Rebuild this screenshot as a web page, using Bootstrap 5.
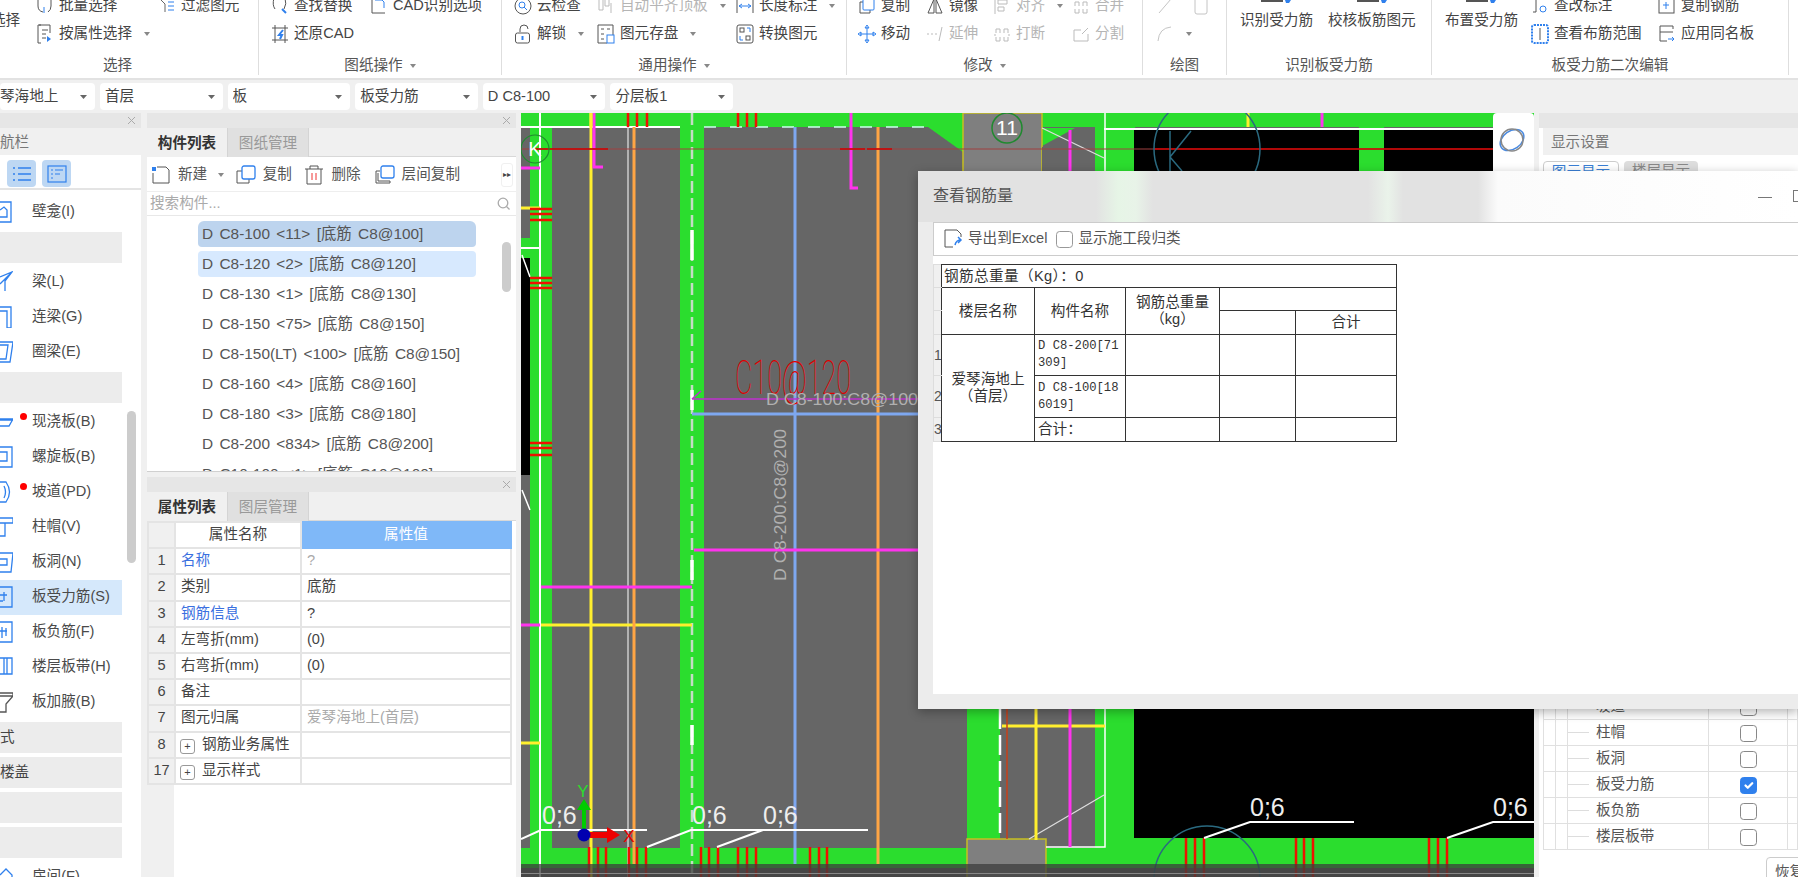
<!DOCTYPE html>
<html lang="zh-CN">
<head>
<meta charset="UTF-8">
<title>查看钢筋量</title>
<link href="https://cdn.jsdelivr.net/npm/bootstrap@5.3.0/dist/css/bootstrap.min.css" rel="stylesheet">
<style>
html,body{height:877px;overflow:hidden}
body{position:relative;background:#f0f0f0;color:#444;font-family:"Liberation Sans","Noto Sans CJK SC",sans-serif;font-size:14.6px}
svg{display:block;flex:none}
/* ribbon */
.rb{height:80px;background:#fff;border-bottom:2px solid #e2e2e2;overflow:hidden}
.rb-group{height:75px;border-right:1px solid #dedede;flex:none}
.rb-tools{display:grid;grid-auto-rows:28px;margin-top:-8px;height:56px;white-space:nowrap}
.rb-label{height:28px;line-height:28px;margin-top:3px;text-align:center;color:#555}
.rb-tool{display:flex;align-items:center;gap:5px}
.rb-off{color:#b5b5b5}
.rb-caret{display:inline-block;border:3.5px solid transparent;border-top:4px solid #888;border-bottom:0;margin-left:7px;vertical-align:middle}
.g1{width:259px}.g1 .rb-tools{grid-template-columns:36px 122px 1fr}
.g1 .rb-label{padding-right:23px}
.g2{width:243px}.g2 .rb-tools{padding-left:12px;grid-template-columns:99px 1fr}
.g3{width:345px}.g3 .rb-tools{padding-left:12px;grid-template-columns:83px 139px 1fr}
.g4{width:296px}.g4 .rb-tools{padding-left:11px;grid-template-columns:68px 67px 79px 1fr}
.g4 .rb-label{padding-right:20px}
.g5{width:84px}.g5 .rb-tools{padding-left:13px;grid-template-columns:36px 1fr}
.g6{width:205px}.g6 .rb-tools{padding-left:13px;grid-template-columns:88px 1fr}
.g7{width:357px}.g7 .rb-tools{padding-left:13px;grid-template-columns:86px 127px 1fr}
.rb-big{grid-row:span 2;justify-self:start;padding-top:8px;display:flex;flex-direction:column;align-items:center;line-height:18px}
.rb-big svg{margin-bottom:8px}
.rb-clip{margin-left:-9px;grid-row:span 2;line-height:56px}
/* selector bar */
.sel-bar{height:33px;padding-top:3px;gap:5px}
.sel-box{width:122.6px;height:27px;min-height:0;padding:0 18px 0 5px;border:0;border-radius:4px;font-size:14.6px;color:#444;line-height:27px;background-size:7px 4px;background-position:right 8px center;background-image:url("data:image/svg+xml,%3Csvg xmlns='http://www.w3.org/2000/svg' viewBox='0 0 7 4'%3E%3Cpath d='M0 0h7L3.500 4z' fill='%23666'/%3E%3C/svg%3E")}
.sel-first{width:95px;padding-left:0}
/* docks */
.dock-row{height:764px;gap:5px}
.dock-nav{width:141px;margin-right:1px}
.dock-mid{width:369px}
.dock-right{width:259px;overflow:hidden;background:#fff}
.dock-strip{height:15px;background:#e6e6e6;display:flex;justify-content:flex-end;align-items:center;padding-right:5px;flex:none}
.dock-title{height:27px;line-height:29px;color:#777;background:#f0f0f0;flex:none}
.nav-body{background:#fff;position:relative;flex:1;overflow:hidden}
.nav-btns{height:35px;border-bottom:2px solid #e4e4e4;padding:5px 0 0 7px;gap:6px;margin-bottom:4.500px}
.nav-btn{width:29px;height:27px;background:#bdd7f3;border-radius:4px;display:flex;align-items:center;justify-content:center}
.nav-item{height:35px;width:122px;display:flex;align-items:center;position:relative;color:#4a4a4a}
.nav-item svg{margin-left:-1px;margin-right:19px}
.nav-on{background:#d5e8fb}
.nav-head{height:31px;width:122px;background:#ececec;margin:2px 0;line-height:31px;overflow:hidden}
.nav-head+.nav-head{margin-top:4px}
.nav-dot{position:absolute;left:19.500px;top:8px;width:7px;height:7px;border-radius:50%;background:#f00}
.nav-scroll{position:absolute;left:127px;top:256px;width:9px;height:152px;border-radius:5px;background:#ccc}
.tab-row{height:29px;background:#f0f0f0;border-bottom:1px solid #d8d8d8;flex:none}
.tab-on,.tab-off{width:81px;text-align:center;line-height:30px;height:29px}
.tab-on{font-weight:700;color:#333;background:#f0f0f0;border-right:1px solid #d4d4d4}
.tab-off{background:#e0e0e0;color:#999;border-right:1px solid #d4d4d4}
.mid-top{height:344px;flex:none;background:#fff;overflow:hidden;position:relative;border-bottom:1px solid #d0d0d0}
.mid-bot{margin-top:5px;flex:1;background:#fff;overflow:hidden}
.mid-tools{height:35px;padding-top:2px;color:#555;border-bottom:1px solid #eee;position:relative}
.mid-tool{display:flex;align-items:center;gap:7px;position:relative}
.mid-new{margin:0 11.500px 0 4px}
.mid-copy{margin-right:12.500px}
.mid-del{margin-right:14px}
.mid-more{margin-left:auto;margin-right:3px;width:12px;height:24px;background:#fff;border:1px solid #f0f0f0;border-radius:3px;font-size:8px;line-height:22px;color:#444;text-align:center}
.mid-search{height:24px;border-bottom:1px solid #e8e8e8;padding:0 6px 0 3px;color:#aaa}
.part-list{padding:5px 0 0 51px;width:329px;height:259px;overflow:hidden}
.part-item{height:26px;margin-bottom:4px;border:0;border-radius:4px;padding:0 0 0 4px;background:none;line-height:26px;color:#555;white-space:nowrap;word-spacing:2.100px;font-size:15.400px}
.part-a{background:#bdd4ee}
.part-b{background:#d7e9fe}
.part-scroll{position:absolute;left:355px;top:114px;width:9px;height:50px;background:#ccc;border-radius:5px}
.prop-wrap{background:linear-gradient(90deg,#f0f0f0 27px,#fff 27px);flex:1}
.prop-table{width:365px;margin:0;table-layout:fixed;border-collapse:collapse;color:#444}
.prop-table td,.prop-table th{padding:0 5px;height:26.200px;border:2px solid #e4e4e4;font-weight:400;white-space:nowrap;line-height:22px;background:#fff;color:inherit}
.prop-table .p-no{width:27px;background:#f0f0f0;text-align:center;padding:0}
.prop-table .p-name{width:126px}
.prop-table .p-head{text-align:center}
.prop-table .p-val{background:#7fb8f8;color:#fff;text-align:center;border-color:#7fb8f8}
.prop-blue{color:#3a6fe0 !important}
.prop-dim{color:#aaa !important}
.prop-plus{display:inline-block;width:15px;height:15px;border:1px solid #999;border-radius:3px;text-align:center;line-height:12px;font-size:11px;margin:0 7px 0 -1px;vertical-align:-1px}
.cad-wrap{width:1013px;position:relative;overflow:hidden;flex:none}
.cad-tools{position:absolute;right:0;top:0;width:41px;height:190px;background:#fff;border-radius:4px 4px 0 0;padding:13px 5px;display:flex;flex-direction:column;gap:22px}
/* right dock */
.show-tabs{height:30px;padding:6px 4px 0;gap:5px;background:#fff;color:#3a7fd5}
.show-tab{width:76px;height:30px;border:1px solid #ccc;border-radius:4px;text-align:center}
.show-tab2{width:74px;background:#ddd;color:#888;border:0}
.show-bottom{margin-top:auto}
.show-table{width:255px;margin:0 0 0 4px;border-collapse:collapse;table-layout:fixed;background:#fff}
.show-table td{height:26px;border:1px solid #e0e0e0;padding:0}
.show-c1{width:12px}
.show-c3{width:141px;white-space:nowrap;color:#555}
.show-c3 i{display:inline-block;width:21px;height:1px;background:#ddd;vertical-align:middle;margin-right:7px}
.show-c4{width:79px;text-align:center}
.show-check{width:17px;height:17px;margin:3px 0 0;border:1px solid #888;border-radius:3px;display:inline-block;float:none}
.show-check:checked{background-color:#2f80ed;border-color:#2f80ed}
.show-foot{height:27px;padding:7px 0 0 227px;background:#fff;white-space:nowrap}
.show-reset{height:30px;width:70px;border:1px solid #ccc;border-radius:4px;padding:4px 8px;color:#555;font-size:14.600px;background:#fff;text-align:left}
/* dialog */
.rebar-win{position:absolute;left:918px;top:171px;right:0;height:538px;background:#ececec;box-shadow:0 3px 10px rgba(0,0,0,.3);padding:0 0 15px 15px;display:flex;flex-direction:column}
.rebar-title{height:51px;flex:none;margin-left:-15px;padding:0 0 2px 15px;font-size:16px;color:#555;background:linear-gradient(90deg,#e2e2e2 0,#e2e2e2 178px,#e6f5e6 200px,#e8f3e8 218px,#e2e2e2 235px,#e2e2e2 450px,#eaf3ea 470px,#e2e2e2 485px,#e2e2e2 560px,#fbfbfb 580px,#fff 100%)}
.rebar-min{width:14px;height:1px;background:#777;margin:4px 21px 0 auto}
.rebar-max{width:12px;height:12px;border:1px solid #777;margin-right:-7px}
.rebar-body{flex:1;background:#fff;position:relative;overflow:hidden}
.rebar-tools{height:34px;border:1px solid #ccc;border-width:1px 0 1px 1px;gap:5px;padding-left:9px;color:#555;background:#fff}
.rebar-check{width:17px;height:17px;margin:0;border:1px solid #999;border-radius:3px}
.rebar-table{margin-top:8px;border-collapse:collapse;table-layout:fixed;width:463px;font-size:14.600px;color:#333}
.rebar-table td{border:1px solid #333;padding:0;text-align:center;line-height:17px;background:#fff}
.rebar-table .r-no{border:1px solid #ddd;border-right-color:#333;background:#f0f0f0;color:#555;font-size:14px;overflow:hidden;text-align:left}
.rebar-table .r-mono{font-family:"Liberation Mono","Noto Sans CJK SC",monospace;font-size:12.200px;text-align:left;padding-left:3px;white-space:nowrap}
.rebar-table .r-left{text-align:left;padding-left:2px;letter-spacing:.4px}
.rebar-table .r-pl{text-align:left;padding-left:3px}
.rc0{width:8px}.rc1{width:93px}.rc2{width:91px}.rc3{width:94px}.rc4{width:76px}.rc5{width:101px}
.rr23{height:23px}.rr24{height:24px}.rr41{height:41px}.rr42{height:42px}
.cad-label{font-family:"Liberation Sans",sans-serif}
.cad-thin{font-family:Roboto,"Liberation Sans",sans-serif;font-weight:100}
</style>
</head>
<body>

<!-- ribbon -->
<div class="rb d-flex">
  <div class="rb-group g1">
    <div class="rb-tools">
      <div class="rb-clip">选择</div>
      <div class="rb-tool"><svg width="18" height="18" viewBox="0 0 18 18" fill="none" stroke="#555"><path d="M2 1v8q0 5 5 6M15 1v8q0 4-3 6" /><path d="M8 10v6" stroke="#2f80ed"/></svg>批量选择</div>
      <div class="rb-tool"><svg width="18" height="18" viewBox="0 0 18 18" fill="none" stroke="#666"><path d="M2 2l5 5v8"/><path d="M10 5h6M10 9h6M10 13h6" stroke="#2f80ed"/></svg>过滤图元</div>
      <div class="rb-tool"><svg width="18" height="20" viewBox="0 0 18 20" fill="none" stroke="#555"><path d="M5 1H2v18h3M3 1h11v8"/><path d="M6 6h6M6 10h4M6 14h4" /><path d="M11 12l4 3-4 3z" fill="#2f80ed" stroke="none"/></svg>按属性选择<span class="rb-caret"></span></div>
    </div>
    <div class="rb-label">选择</div>
  </div>
  <div class="rb-group g2">
    <div class="rb-tools">
      <div class="rb-tool"><svg width="18" height="18" viewBox="0 0 18 18" fill="none" stroke="#555"><path d="M3 1Q1 8 4 12M14 1q2 6-1 11"/><path d="M11 12l4 4" stroke="#2f80ed" stroke-width="2"/></svg>查找替换</div>
      <div class="rb-tool"><svg width="18" height="18" viewBox="0 0 18 18" fill="none" stroke="#555"><path d="M2 1v15h13"/><path d="M5 3h7l2 2v6" stroke="#2f80ed"/></svg>CAD识别选项</div>
      <div class="rb-tool"><svg width="18" height="20" viewBox="0 0 18 20" fill="none" stroke="#555"><path d="M4 1v18M14 1v18M1 4h16M1 16h16"/><path d="M12 6l-4 5h3l-2 4" stroke="#2f80ed" stroke-width="2"/></svg>还原CAD</div>
    </div>
    <div class="rb-label">图纸操作<span class="rb-caret"></span></div>
  </div>
  <div class="rb-group g3">
    <div class="rb-tools">
      <div class="rb-tool"><svg width="18" height="18" viewBox="0 0 18 18" fill="none" stroke="#555"><circle cx="9" cy="9" r="8"/><circle cx="8" cy="8" r="3" stroke="#2f80ed"/><path d="M10 10l3 3" stroke="#2f80ed"/></svg>云检查</div>
      <div class="rb-tool rb-off"><svg width="18" height="18" viewBox="0 0 18 18" fill="none" stroke="#bbb"><path d="M2 1v12h4V1M8 1v8h4V1M14 6v10"/></svg>自动平齐顶板<span class="rb-caret"></span></div>
      <div class="rb-tool"><svg width="18" height="18" viewBox="0 0 18 18" fill="none" stroke="#555"><path d="M1 2v14M17 2v14"/><path d="M3 9h12M3 9l3-2M3 9l3 2M15 9l-3-2M15 9l-3 2" stroke="#2f80ed"/></svg>长度标注<span class="rb-caret"></span></div>
      <div class="rb-tool"><svg width="18" height="20" viewBox="0 0 18 20" fill="none" stroke="#555"><path d="M6 8V5q0-4 4-4t4 4"/><rect x="1.500" y="9" width="14" height="10" rx="2"/><path d="M8.500 12v4" stroke="#2f80ed" stroke-width="2"/></svg>解锁<span class="rb-caret"></span></div>
      <div class="rb-tool"><svg width="18" height="20" viewBox="0 0 18 20" fill="none" stroke="#555"><path d="M10 19H1V1h15v10"/><path d="M4 5h3M10 5h3M4 10h3M4 15h3" /><rect x="10" y="11" width="7" height="8" stroke="#2f80ed"/></svg>图元存盘<span class="rb-caret"></span></div>
      <div class="rb-tool"><svg width="18" height="20" viewBox="0 0 18 20" fill="none" stroke="#555"><rect x="1" y="1" width="16" height="18" rx="2"/><rect x="4" y="4" width="4" height="4"/><rect x="10" y="12" width="4" height="4"/><path d="M11 4h3v4M4 12v4h3" stroke="#2f80ed"/></svg>转换图元</div>
    </div>
    <div class="rb-label">通用操作<span class="rb-caret"></span></div>
  </div>
  <div class="rb-group g4">
    <div class="rb-tools">
      <div class="rb-tool"><svg width="18" height="18" viewBox="0 0 18 18" fill="none" stroke="#555"><path d="M5 5H2v11h10v-3"/><rect x="5" y="1" width="11" height="12" stroke="#2f80ed" rx="1"/></svg>复制</div>
      <div class="rb-tool"><svg width="18" height="18" viewBox="0 0 18 18" fill="none" stroke="#555"><path d="M8 2L2 16h6zM10 2l6 14h-6z"/></svg>镜像</div>
      <div class="rb-tool rb-off"><svg width="18" height="18" viewBox="0 0 18 18" fill="none" stroke="#bbb"><path d="M2 1v16M5 3h9v4H5zM5 10h6v4H5z"/></svg>对齐<span class="rb-caret"></span></div>
      <div class="rb-tool rb-off"><svg width="18" height="18" viewBox="0 0 18 18" fill="none" stroke="#bbb"><path d="M3 9V5h4v4M11 9V5h4v4M3 12v4h4v-4M11 12v4h4v-4"/></svg>合并</div>
      <div class="rb-tool"><svg width="18" height="20" viewBox="0 0 18 20" fill="none" stroke="#2f80ed"><path d="M9 3v14M2 10h14M9 1l-2 3h4zM9 19l-2-3h4zM0 10l3-2v4zM18 10l-3-2v4z"/></svg>移动</div>
      <div class="rb-tool rb-off"><svg width="18" height="18" viewBox="0 0 18 18" fill="none" stroke="#bbb"><path d="M1 9h2M5 9h2M9 9h2M16 2l-3 14"/></svg>延伸</div>
      <div class="rb-tool rb-off"><svg width="18" height="18" viewBox="0 0 18 18" fill="none" stroke="#bbb"><path d="M3 8V4h4v4M11 8V4h4v4M3 12v4h4v-4M11 12v4h4v-4M1 10h2M15 10h2"/></svg>打断</div>
      <div class="rb-tool rb-off"><svg width="18" height="18" viewBox="0 0 18 18" fill="none" stroke="#bbb"><path d="M16 9v7H2V5h7M10 9l6-6"/></svg>分割</div>
    </div>
    <div class="rb-label">修改<span class="rb-caret"></span></div>
  </div>
  <div class="rb-group g5">
    <div class="rb-tools">
      <div class="rb-tool"><svg width="18" height="20" viewBox="0 0 18 20" fill="none" stroke="#c4c4c4"><path d="M3 17L15 3"/></svg></div>
      <div class="rb-tool"><svg width="18" height="20" viewBox="0 0 18 20" fill="none" stroke="#c4c4c4"><rect x="3" y="2" width="12" height="16" rx="2"/></svg></div>
      <div class="rb-tool" style="grid-column:span 2"><svg width="18" height="20" viewBox="0 0 18 20" fill="none" stroke="#c4c4c4"><path d="M2 17Q3 4 15 3"/></svg><span class="rb-caret"></span></div>
    </div>
    <div class="rb-label">绘图</div>
  </div>
  <div class="rb-group g6">
    <div class="rb-tools">
      <div class="rb-big"><svg width="34" height="3" viewBox="0 0 34 3"><path d="M2 0h22v2H2z" fill="#555"/><path d="M26 0h6l-2 3h-3z" fill="#2f80ed"/></svg>识别受力筋</div>
      <div class="rb-big"><svg width="34" height="3" viewBox="0 0 34 3"><path d="M2 0h22v2H2z" fill="#555"/><path d="M26 0h6l-2 3h-3z" fill="#2f80ed"/></svg>校核板筋图元</div>
    </div>
    <div class="rb-label">识别板受力筋</div>
  </div>
  <div class="rb-group g7">
    <div class="rb-tools">
      <div class="rb-big"><svg width="34" height="3" viewBox="0 0 34 3"><path d="M2 0h22v2H2z" fill="#555"/><path d="M26 0h6l-2 3h-3z" fill="#2f80ed"/></svg>布置受力筋</div>
      <div class="rb-tool"><svg width="18" height="18" viewBox="0 0 18 18" fill="none" stroke="#555"><path d="M3 1h4M5 1v14H2"/><circle cx="12" cy="12" r="3" stroke="#2f80ed"/></svg>查改标注</div>
      <div class="rb-tool"><svg width="18" height="18" viewBox="0 0 18 18" fill="none" stroke="#555"><rect x="1" y="1" width="15" height="15"/><path d="M8 5v7M5 8h6" stroke="#2f80ed"/></svg>复制钢筋</div>
      <div class="rb-tool" style="grid-column:2"><svg width="18" height="20" viewBox="0 0 18 20" fill="none" stroke="#2f80ed" stroke-width="2" stroke-dasharray="2 1"><rect x="1" y="1" width="16" height="18" rx="2"/><path d="M9 4v12" stroke="#555" stroke-width="1" stroke-dasharray="none"/></svg>查看布筋范围</div>
      <div class="rb-tool"><svg width="18" height="20" viewBox="0 0 18 20" fill="none" stroke="#555"><path d="M15 5V2H2v15h7M2 8h13"/><path d="M10 15h6M14 13l2 2-2 2" stroke="#2f80ed"/></svg>应用同名板</div>
    </div>
    <div class="rb-label">板受力筋二次编辑</div>
  </div>
</div>

<!-- selector bar -->
<div class="sel-bar d-flex">
  <select class="form-select sel-box sel-first"><option>琴海地上</option></select>
  <select class="form-select sel-box"><option>首层</option></select>
  <select class="form-select sel-box"><option>板</option></select>
  <select class="form-select sel-box"><option>板受力筋</option></select>
  <select class="form-select sel-box"><option>D C8-100</option></select>
  <select class="form-select sel-box"><option>分层板1</option></select>
</div>

<div class="dock-row d-flex">
  <!-- navigation dock -->
  <div class="dock-nav d-flex flex-column flex-shrink-0">
    <div class="dock-strip"><svg width="9" height="9" viewBox="0 0 9 9" stroke="#aaa"><path d="M1 1l7 7M8 1l-7 7"/></svg></div>
    <div class="dock-title">航栏</div>
    <div class="nav-body">
      <div class="nav-btns d-flex">
        <div class="nav-btn"><svg width="20" height="16" viewBox="0 0 20 16" fill="none" stroke="#2f80ed" stroke-width="1.500"><path d="M1 2h2M1 8h2M1 14h2M6 2h13M6 8h13M6 14h13"/></svg></div>
        <div class="nav-btn"><svg width="20" height="18" viewBox="0 0 20 18" fill="none" stroke="#2f80ed" stroke-width="1.200"><rect x="1" y="1" width="18" height="16"/><path d="M4 5h2M8 5h8M4 9h2M8 9h5M4 13h2"/></svg></div>
      </div>
      <div class="nav-item"><svg width="14" height="22" viewBox="0 0 14 22" fill="none" stroke="#2f80ed" stroke-width="1.300"><path d="M1 1h11v20H1M1 9l4-3 3 3v7H1"/></svg>壁龛(I)</div>
      <div class="nav-head"></div>
      <div class="nav-item"><svg width="14" height="22" viewBox="0 0 14 22" fill="none" stroke="#2f80ed" stroke-width="1.300"><path d="M1 6L13 1 6 10v10M1 13L13 1"/></svg>梁(L)</div>
      <div class="nav-item"><svg width="14" height="22" viewBox="0 0 14 22" fill="none" stroke="#2f80ed" stroke-width="1.300"><path d="M1 1h11v21H8V5H1"/></svg>连梁(G)</div>
      <div class="nav-item"><svg width="14" height="22" viewBox="0 0 14 22" fill="none" stroke="#2f80ed" stroke-width="1.300"><path d="M1 1h13l-3 20H1M1 4h8L7 18H1"/></svg>圈梁(E)</div>
      <div class="nav-head"></div>
      <div class="nav-item"><svg width="14" height="22" viewBox="0 0 14 22" fill="none" stroke="#2f80ed" stroke-width="1.300"><path d="M1 9h13v-1H1M1 15h9l4-7"/></svg>现浇板(B)<span class="nav-dot"></span></div>
      <div class="nav-item"><svg width="14" height="22" viewBox="0 0 14 22" fill="none" stroke="#2f80ed" stroke-width="1.300"><path d="M1 1h12v20H1M1 6h7v9H1"/></svg>螺旋板(B)</div>
      <div class="nav-item"><svg width="14" height="22" viewBox="0 0 14 22" fill="none" stroke="#2f80ed" stroke-width="1.300"><path d="M1 1h6q7 10 0 20H1M5 5q3 6 0 12"/></svg>坡道(PD)<span class="nav-dot"></span></div>
      <div class="nav-item"><svg width="14" height="22" viewBox="0 0 14 22" fill="none" stroke="#2f80ed" stroke-width="1.300"><path d="M1 2h13v5H1M6 7v13H1"/></svg>柱帽(V)</div>
      <div class="nav-item"><svg width="14" height="22" viewBox="0 0 14 22" fill="none" stroke="#2f80ed" stroke-width="1.300"><path d="M1 2h13l-2 19H1M1 8h7v6H1"/></svg>板洞(N)</div>
      <div class="nav-item nav-on"><svg width="14" height="22" viewBox="0 0 14 22" fill="none" stroke="#2f80ed" stroke-width="1.300"><path d="M1 1h12v20H1M1 9h7M5 6v9M1 15h3"/></svg>板受力筋(S)</div>
      <div class="nav-item"><svg width="14" height="22" viewBox="0 0 14 22" fill="none" stroke="#2f80ed" stroke-width="1.300"><path d="M1 1h12v20H1M1 10h7M3 6v11M7 7v8"/></svg>板负筋(F)</div>
      <div class="nav-item"><svg width="14" height="22" viewBox="0 0 14 22" fill="none" stroke="#2f80ed" stroke-width="1.300"><path d="M1 2h12v16H1M8 2v16M5 2v16" /></svg>楼层板带(H)</div>
      <div class="nav-item"><svg width="14" height="22" viewBox="0 0 14 22" fill="none" stroke="#555" stroke-width="1.300"><path d="M1 2h13v3l-7 8v8H1M1 5h13"/></svg>板加腋(B)</div>
      <div class="nav-head">式</div>
      <div class="nav-head">楼盖</div>
      <div class="nav-head"></div>
      <div class="nav-head"></div>
      <div class="nav-item"><svg width="14" height="22" viewBox="0 0 14 22" fill="none" stroke="#2f80ed" stroke-width="1.300"><path d="M1 9l6-6 6 6v12H1"/></svg>房间(F)</div>
      <div class="nav-scroll"></div>
    </div>
  </div>

  <!-- component dock -->
  <div class="dock-mid d-flex flex-column flex-shrink-0">
    <div class="dock-strip"><svg width="9" height="9" viewBox="0 0 9 9" stroke="#aaa"><path d="M1 1l7 7M8 1l-7 7"/></svg></div>
    <div class="mid-top">
      <div class="tab-row d-flex"><div class="tab-on">构件列表</div><div class="tab-off">图纸管理</div></div>
      <div class="mid-tools d-flex align-items-center">
        <div class="mid-tool mid-new"><svg width="20" height="20" viewBox="0 0 20 20" fill="none" stroke="#555"><path d="M2 8v10h16V5l-3-3H6"/><path d="M1 2h4v4H1z" fill="#2f80ed" stroke="none"/></svg>新建<span class="rb-caret ms-1"></span></div>
        <div class="mid-tool mid-copy"><svg width="20" height="20" viewBox="0 0 20 20" fill="none" stroke="#555"><path d="M6 6H1v12h12v-4"/><rect x="6" y="1" width="13" height="13" rx="2" stroke="#2f80ed" stroke-width="1.300"/></svg>复制</div>
        <div class="mid-tool mid-del"><svg width="20" height="20" viewBox="0 0 20 20" fill="none" stroke="#555"><path d="M1 4h18M6 4V1h8v3M3 4v15h14V4"/><path d="M8 8v7M12 8v7" stroke="#e33"/></svg>删除</div>
        <div class="mid-tool"><svg width="20" height="20" viewBox="0 0 20 20" fill="none" stroke="#555"><path d="M5 6H1v12h14v-2M3 8v8h12"/><rect x="6" y="1" width="13" height="12" rx="2" stroke="#2f80ed" stroke-width="1.300"/></svg>层间复制</div>
        <div class="mid-more">▸▸</div>
      </div>
      <div class="mid-search d-flex align-items-center justify-content-between">搜索构件...<svg width="13" height="13" viewBox="0 0 13 13" fill="none" stroke="#aaa" stroke-width="1.300"><circle cx="6" cy="6" r="4.800"/><path d="M9.500 9.500l3 3"/></svg></div>
      <ul class="list-group part-list">
        <li class="list-group-item part-item part-a">D C8-100 &lt;11&gt; [底筋 C8@100]</li>
        <li class="list-group-item part-item part-b">D C8-120 &lt;2&gt; [底筋 C8@120]</li>
        <li class="list-group-item part-item">D C8-130 &lt;1&gt; [底筋 C8@130]</li>
        <li class="list-group-item part-item">D C8-150 &lt;75&gt; [底筋 C8@150]</li>
        <li class="list-group-item part-item">D C8-150(LT) &lt;100&gt; [底筋 C8@150]</li>
        <li class="list-group-item part-item">D C8-160 &lt;4&gt; [底筋 C8@160]</li>
        <li class="list-group-item part-item">D C8-180 &lt;3&gt; [底筋 C8@180]</li>
        <li class="list-group-item part-item">D C8-200 &lt;834&gt; [底筋 C8@200]</li>
        <li class="list-group-item part-item">D C10-100 &lt;1&gt; [底筋 C10@100]</li>
      </ul>
      <div class="part-scroll"></div>
    </div>
    <div class="mid-bot d-flex flex-column">
      <div class="dock-strip"><svg width="9" height="9" viewBox="0 0 9 9" stroke="#aaa"><path d="M1 1l7 7M8 1l-7 7"/></svg></div>
      <div class="tab-row d-flex"><div class="tab-on">属性列表</div><div class="tab-off">图层管理</div></div>
      <div class="prop-wrap">
        <table class="table prop-table">
          <tr><th class="p-no"></th><th class="p-name p-head">属性名称</th><th class="p-val">属性值</th></tr>
          <tr><td class="p-no">1</td><td class="prop-blue">名称</td><td class="prop-dim">?</td></tr>
          <tr><td class="p-no">2</td><td>类别</td><td>底筋</td></tr>
          <tr><td class="p-no">3</td><td class="prop-blue">钢筋信息</td><td>?</td></tr>
          <tr><td class="p-no">4</td><td>左弯折(mm)</td><td>(0)</td></tr>
          <tr><td class="p-no">5</td><td>右弯折(mm)</td><td>(0)</td></tr>
          <tr><td class="p-no">6</td><td>备注</td><td></td></tr>
          <tr><td class="p-no">7</td><td>图元归属</td><td class="prop-dim">爱琴海地上(首层)</td></tr>
          <tr><td class="p-no">8</td><td><span class="prop-plus">+</span>钢筋业务属性</td><td></td></tr>
          <tr><td class="p-no">17</td><td><span class="prop-plus">+</span>显示样式</td><td></td></tr>
        </table>
      </div>
    </div>
  </div>

  <!-- drawing canvas -->
  <div class="cad-wrap">
    <svg width="1013" height="764" viewBox="521 113 1013 764">
      <rect x="521" y="113" width="1013" height="764" fill="#666"/>
      <g fill="#2bdd2e">
        <rect x="521" y="113" width="1013" height="14"/>
        <rect x="530" y="127" width="22" height="730"/>
        <rect x="680" y="127" width="24" height="730"/>
        <rect x="967" y="171" width="33" height="690"/>
        <rect x="1095" y="127" width="40" height="730"/>
        <rect x="1359" y="127" width="25" height="200"/>
        <rect x="521" y="238" width="9" height="20"/>
        <rect x="521" y="848" width="613" height="20"/>
        <rect x="1134" y="838" width="400" height="30"/>
        <path d="M928 127h35v25zM1042 128h33l-33 18z"/>
      </g>
      <path d="M1134 129h225v58h25v-58h150v709h-400z" fill="#000"/>
      <rect x="1359" y="187" width="25" height="140" fill="#2bdd2e"/>
      <rect x="1384" y="129" width="150" height="240" fill="#000"/>
      <rect x="521" y="258" width="9" height="217" fill="#000"/>
      <g fill="#7f7f7f" stroke="#c8c020" stroke-width="1.500">
        <rect x="963" y="113" width="79" height="67"/>
        <rect x="967" y="839" width="79" height="40"/>
      </g>
      <g fill="#666"><rect x="1042" y="147" width="53" height="30"/></g>

      <!-- white frame lines -->
      <g stroke="#fff" stroke-width="2" fill="none">
        <path d="M521 127h159M1104 129h430M540 113v764M521 248h19"/>
        <path d="M1105 113v734H1046" stroke-width="1.500"/>
        <path d="M1000 709v130" stroke-width="2.500" stroke-dasharray="20 6"/>
        <path d="M692 113v764" stroke="#c4dcc4" stroke-width="2.500" stroke-dasharray="12 5"/>
        <path d="M692 230v30M692 390v20M692 560v20M692 725v20" stroke-width="3.500"/>
        <path d="M704 127H928" stroke="#cfe" stroke-width="1.500" stroke-dasharray="12 14"/>
        <path d="M522 255l8 22M522 490l8 20" stroke-width="1.500"/>
        <path d="M628 127v750" stroke="#ccc" stroke-width="1.500"/>
        <path d="M1042 128l62 30M1104 795l-75 44" stroke="#ddd" stroke-width="1.300"/>
      </g>

      <!-- coloured rebar -->
      <g fill="none">
        <path d="M591 113v764M541 625h151M1036 700v140M1002 726h103" stroke="#ffef2e" stroke-width="3"/>
        <path d="M634 127v737M878 127v737" stroke="#ffa544" stroke-width="3"/>
        <path d="M795 127v737M692 414h228" stroke="#7ea8f0" stroke-width="3"/>
        <path d="M594 113v54h9M851 113v75h7M694 550h226M541 587h151M521 168h19M521 625h19M1070 700v147M1070 130v50" stroke="#ff33ee" stroke-width="3"/>
        <path d="M692 399h228M692 399l9-8" stroke="#c030d0" stroke-width="1.500"/>
        <path d="M521 208h19M521 743h19M1248 113v14M591 113v14" stroke="#ffef2e" stroke-width="3"/>
        <path d="M1322 113v14" stroke="#ff33ee" stroke-width="3"/>
        <path d="M1007 709v130" stroke="#c8401a" stroke-width="1.500"/>
        <path d="M521 149h1013" stroke="#a04040" stroke-width="1"/>
        <path d="M533 149h75M1154 149h380M840 149h25M867 149h25" stroke="#d00000" stroke-width="1.500"/>
      </g>

      <!-- red ticks -->
      <g stroke="#ee1100" stroke-width="2.500" fill="none">
        <path d="M530 209h22M530 214h22M530 220h22M530 278h22M530 283h22M530 288h22M530 443h22M530 448h22M530 455h22"/>
        <path d="M628 113v14M637 113v14M647 113v14M738 113v14M747 113v14M756 113v14"/>
        <path d="M589 847v30M598 847v30M606 847v30M629 847v30M637 847v30M646 847v30M701 847v30M709 847v30M718 847v30M738 847v30M747 847v30M756 847v30M810 847v30M819 847v30M827 847v30"/>
        <path d="M1186 838v39M1195 838v39M1204 838v39M1296 838v39M1304 838v39M1313 838v39M1429 838v39M1438 838v39M1447 838v39"/>
      </g>

      <!-- axis circles -->
      <g fill="none" stroke="#2a6a80" stroke-width="1.500">
        <circle cx="1207" cy="149" r="53"/>
        <circle cx="1207" cy="879" r="53"/>
        <path d="M1170 131v40M1191 131l-21 26 12 14"/>
      </g>
      <circle cx="1007" cy="128" r="15" fill="none" stroke="#1f8a2f" stroke-width="1.500"/>
      <text x="1007" y="135" text-anchor="middle" font-size="21" fill="#fff" class="cad-label">11</text>
      <circle cx="535" cy="149" r="14" fill="none" stroke="#1f8a2f" stroke-width="1.200"/>
      <text x="535" y="156" text-anchor="middle" font-size="20" fill="#fff" class="cad-label">K</text>

      <!-- annotations -->
      <text x="735" y="394" font-size="48" fill="#e00000" textLength="116" lengthAdjust="spacingAndGlyphs" class="cad-thin">C10@120</text>
      <text x="766" y="405" font-size="17" fill="#b0b0b0" textLength="152" lengthAdjust="spacingAndGlyphs" class="cad-label">D C8-100:C8@100</text>
      <text transform="translate(786 581) rotate(-90)" font-size="17" fill="#b0b0b0" textLength="152" lengthAdjust="spacingAndGlyphs" class="cad-label">D C8-200:C8@200</text>

      <!-- leaders -->
      <g stroke="#fff" stroke-width="2" fill="none">
        <path d="M521 839l20-9h106M647 847l44-17h177M717 847l46-17"/>
        <path d="M1204 838l46-16h104M1447 838l46-16h41"/>
      </g>
      <g fill="#eee" font-size="25" class="cad-label">
        <text x="542" y="824">0;6</text>
        <text x="692" y="824">0;6</text>
        <text x="763" y="824">0;6</text>
        <text x="1250" y="816">0;6</text>
        <text x="1493" y="816">0;6</text>
      </g>

      <!-- dark band at canvas foot -->
      <rect x="521" y="864" width="1013" height="13" fill="#3c3c3c" fill-opacity=".75"/>
      <rect x="521" y="873" width="1013" height="1" fill="#888"/>

      <!-- UCS -->
      <path d="M582 830v-20h-5l7-11 7 11h-5v20z" fill="#0c0"/>
      <path d="M590 832h17v-5l13 8-13 8v-5h-17z" fill="#e00"/>
      <circle cx="584" cy="835" r="6.500" fill="#0000b0"/>
      <text x="583" y="797" font-size="17" fill="#2bdd2e" text-anchor="middle" class="cad-label">Y</text>
      <text x="629" y="842" font-size="17" fill="#e00" text-anchor="middle" class="cad-label">X</text>
    </svg>
    <div class="cad-tools">
      <svg width="28" height="28" viewBox="0 0 28 28" fill="none"><ellipse cx="14" cy="14" rx="13" ry="9" transform="rotate(-35 14 14)" stroke="#4a8ae0" stroke-width="1.500"/><circle cx="14" cy="14" r="11" stroke="#888" stroke-width="1.500"/></svg>
      <svg width="28" height="28" viewBox="0 0 28 28" fill="none" stroke="#777" stroke-width="1.500"><path d="M2 10l6-6h18v16l-6 6H2z"/></svg>
    </div>
  </div>

  <!-- display settings dock -->
  <div class="dock-right d-flex flex-column">
    <div class="dock-strip"></div>
    <div class="dock-title ps-2 ms-1">显示设置</div>
    <div class="show-tabs d-flex"><div class="show-tab">图元显示</div><div class="show-tab show-tab2">楼层显示</div></div>
    <div class="show-bottom">
      <table class="show-table">
        <tr><td class="show-c1"></td><td class="show-c1"></td><td class="show-c3"><i></i>坡道</td><td class="show-c4"><input class="form-check-input show-check" type="checkbox"></td><td></td></tr>
        <tr><td></td><td></td><td class="show-c3"><i></i>柱帽</td><td class="show-c4"><input class="form-check-input show-check" type="checkbox"></td><td></td></tr>
        <tr><td></td><td></td><td class="show-c3"><i></i>板洞</td><td class="show-c4"><input class="form-check-input show-check" type="checkbox"></td><td></td></tr>
        <tr><td></td><td></td><td class="show-c3"><i></i>板受力筋</td><td class="show-c4"><input class="form-check-input show-check" type="checkbox" checked></td><td></td></tr>
        <tr><td></td><td></td><td class="show-c3"><i></i>板负筋</td><td class="show-c4"><input class="form-check-input show-check" type="checkbox"></td><td></td></tr>
        <tr><td></td><td></td><td class="show-c3"><i></i>楼层板带</td><td class="show-c4"><input class="form-check-input show-check" type="checkbox"></td><td></td></tr>
      </table>
      <div class="show-foot"><button class="btn show-reset" type="button">恢复默认</button></div>
    </div>
  </div>
</div>

<!-- rebar quantity window -->
<div class="rebar-win">
  <div class="rebar-title d-flex align-items-center">
    查看钢筋量
    <span class="rebar-min"></span><span class="rebar-max"></span>
  </div>
  <div class="rebar-body">
    <div class="rebar-tools d-flex align-items-center">
      <svg width="20" height="20" viewBox="0 0 20 20" fill="none" stroke="#555"><path d="M18 8V5l-4-4H2v17h8"/><path d="M12 16q1-5 6-5M15 8l3 3-3 3" stroke="#2f80ed" stroke-width="1.500"/></svg>
      <span class="me-1">导出到Excel</span>
      <input class="form-check-input rebar-check" type="checkbox">
      <span>显示施工段归类</span>
    </div>
    <table class="rebar-table">
      <colgroup><col class="rc0"><col class="rc1"><col class="rc2"><col class="rc3"><col class="rc4"><col class="rc5"></colgroup>
      <tr class="rr23"><td class="r-no"></td><td colspan="5" class="r-left">钢筋总重量（Kg）：0</td></tr>
      <tr class="rr23"><td class="r-no"></td><td rowspan="2">楼层名称</td><td rowspan="2">构件名称</td><td rowspan="2">钢筋总重量<br>（kg）</td><td colspan="2"></td></tr>
      <tr class="rr24"><td class="r-no"></td><td></td><td>合计</td></tr>
      <tr class="rr41"><td class="r-no">1</td><td rowspan="3">爱琴海地上<br>（首层）</td><td class="r-mono">D C8-200[71<br>309]</td><td></td><td></td><td></td></tr>
      <tr class="rr42"><td class="r-no">2</td><td class="r-mono">D C8-100[18<br>6019]</td><td></td><td></td><td></td></tr>
      <tr class="rr24"><td class="r-no">3</td><td class="r-pl">合计：</td><td></td><td></td><td></td></tr>
    </table>
  </div>
</div>

<script src="https://cdn.jsdelivr.net/npm/bootstrap@5.3.0/dist/js/bootstrap.bundle.min.js"></script>
</body>
</html>
